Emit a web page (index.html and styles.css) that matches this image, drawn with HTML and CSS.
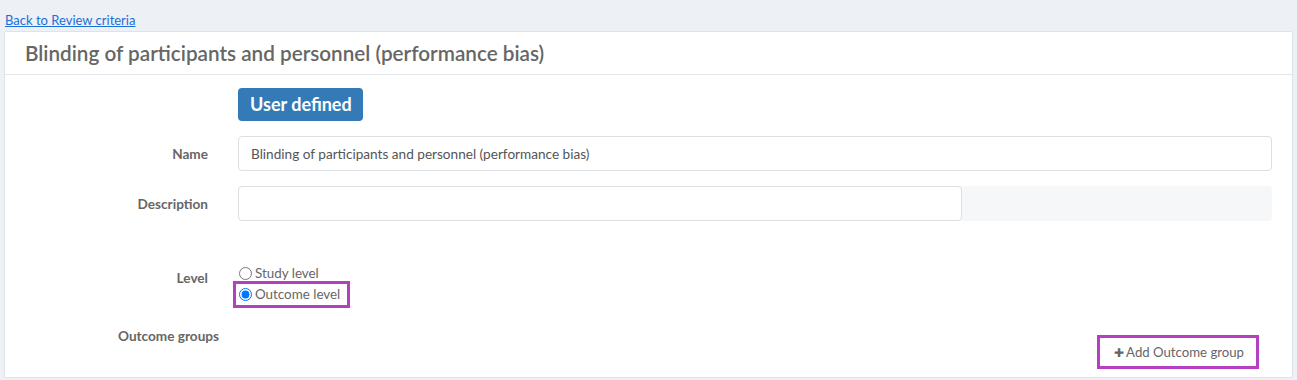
FILE: index.html
```html
<!DOCTYPE html>
<html>
<head>
	<title>Review criterion</title>
	<link rel="stylesheet" href="styles.css">
</head>
<body>
	<a class="back" href="#">Back to Review criteria</a>
	<div class="card">
		<div class="card-head">
			<h3>Blinding of participants and personnel (performance bias)</h3>
		</div>
		<div class="card-body">
			<div class="row">
				<div class="label"></div>
				<div class="field"><span class="badge">User defined</span></div>
			</div>
			<div class="row row-name">
				<div class="label">Name</div>
				<div class="field"><input class="input" type="text" value="Blinding of participants and personnel (performance bias)"></div>
			</div>
			<div class="row row-desc">
				<div class="label">Description</div>
				<div class="field desc-field">
					<input class="input desc-input" type="text" value="">
					<div class="desc-rest"></div>
				</div>
			</div>
			<div class="row row-level">
				<div class="label">Level</div>
				<div class="field">
					<label class="radio"><input type="radio" name="level"> Study level</label>
					<label class="radio marked"><input type="radio" name="level" checked> Outcome level</label>
				</div>
			</div>
			<div class="groups">
				<div class="groups-label">Outcome groups</div>
				<div class="groups-actions">
					<span class="add-btn marked"><span class="plus">&#10010;</span>Add Outcome group</span>
				</div>
			</div>
		</div>
	</div>
</body>
</html>
```
FILE: styles.css
```css
*{
	box-sizing: border-box;
	margin: 0;
	padding: 0;
}
body{
	background: #edf0f5;
	font-family: "Source Sans Pro", Lato, "Liberation Sans", sans-serif;
	color: #555;
	font-size: 14px;
	padding: 11px 4px 0 4px;
}
.back{
	display: block;
	margin-left: 1px;
	font-size: 13px;
	line-height: 18px;
	color: #1a6fd8;
	text-decoration: underline;
}
.card{
	margin-top: 2px;
	width: 1289px;
	background: #fff;
	border: 1px solid #dfe2e6;
	border-radius: 2px;
}
.card-head{
	height: 43px;
	padding: 0 20px;
	display: flex;
	align-items: center;
	border-bottom: 1px solid #e3e5e8;
}
.card-head h3{
	font-size: 20.7px;
	font-weight: 600;
	color: #666;
}
.card-body{
	padding: 13px 20px 8px 0;
}
.row{
	display: flex;
	align-items: center;
	gap: 30px;
}
.label{
	width: 203px;
	flex: none;
	text-align: right;
	font-weight: 700;
	font-size: 13.6px;
	color: #666;
}
.field{
	flex: 1;
}
.badge{
	display: inline-block;
	background: #337ab7;
	color: #fff;
	font-weight: 700;
	font-size: 18px;
	line-height: 33px;
	padding: 0 11px 0 12px;
	border-radius: 4px;
}
.row-name{
	margin-top: 15px;
}
.row-desc{
	margin-top: 15px;
}
.input{
	display: block;
	width: 100%;
	height: 35px;
	border: 1px solid #dcdfe3;
	border-radius: 4px;
	padding: 0 12px;
	font-family: inherit;
	font-size: 13.6px;
	color: #555;
	background: #fff;
}
.desc-field{
	display: flex;
	background: #f6f7f9;
	border-radius: 4px;
}
.desc-input{
	width: 724px;
	flex: none;
}
.row-level{
	margin-top: 44px;
	align-items: flex-start;
}
.row-level .label{
	padding-top: 5px;
}
.radio{
	display: flex;
	align-items: center;
	gap: 3px;
	font-size: 13.4px;
	color: #666;
	line-height: 16px;
	width: fit-content;
}
.radio input{
	width: 13px;
	height: 13px;
	margin: 0 0 0 1px;
}
.marked{
	border: 3px solid #b53fc0;
}
.radio.marked{
	margin-left: -5px;
	padding: 2px 7px 3px 2px;
}
.groups{
	display: flex;
	margin-top: 20px;
}
.groups-label{
	width: 214px;
	flex: none;
	text-align: right;
	font-weight: 700;
	font-size: 13.6px;
	color: #666;
}
.groups-actions{
	flex: 1;
	display: flex;
	justify-content: flex-end;
	padding-top: 7px;
	padding-right: 13px;
}
.add-btn{
	display: flex;
	align-items: center;
	height: 34px;
	padding: 0 12px 0 14px;
	font-size: 13.2px;
	color: #666;
}
.plus{
	font-size: 12px;
	margin-right: 2px;
	color: #666;
}
```
